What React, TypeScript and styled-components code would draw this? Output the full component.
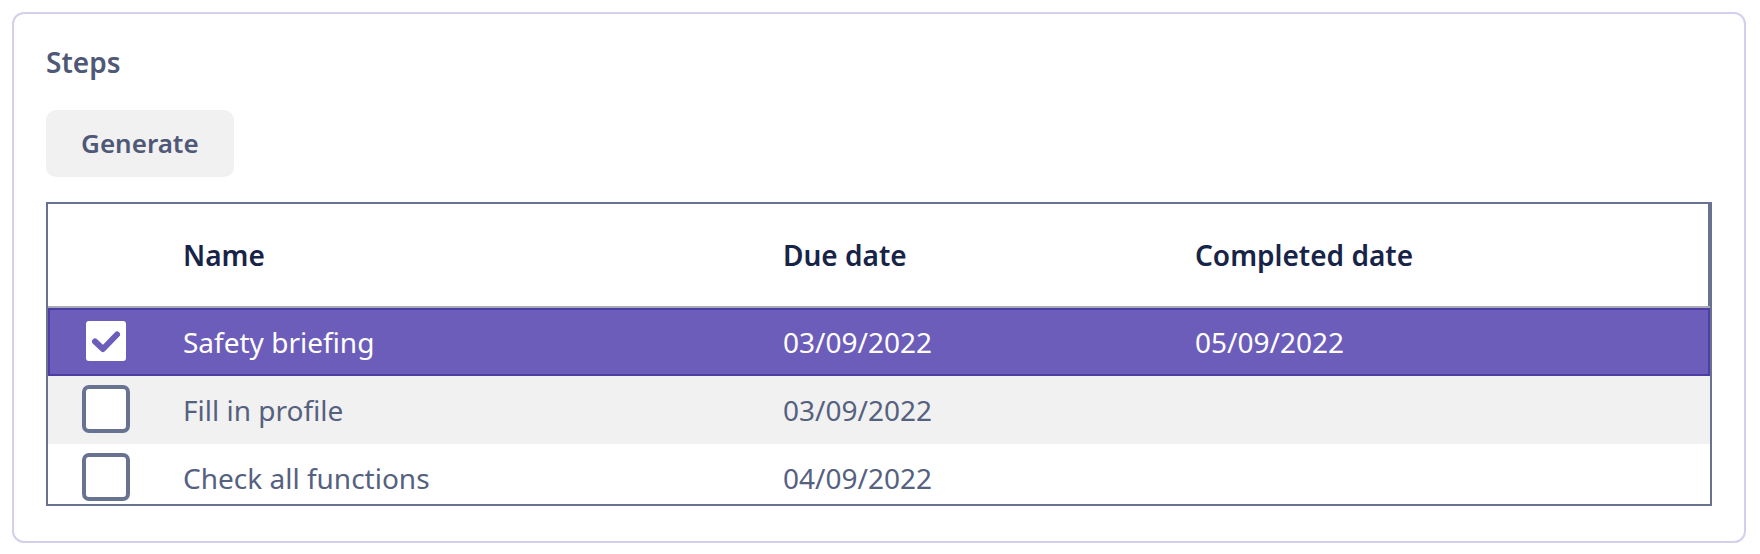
import React from 'react'
import styled, { createGlobalStyle } from 'styled-components'

type Step = {
  name: string
  due: string
  completed?: string
  done: boolean
}

const steps: Step[] = [
  { name: 'Safety briefing', due: '03/09/2022', completed: '05/09/2022', done: true },
  { name: 'Fill in profile', due: '03/09/2022', done: false },
  { name: 'Check all functions', due: '04/09/2022', done: false },
]

const GlobalStyle = createGlobalStyle`
  html, body {
    margin: 0;
    padding: 0;
    background: #ffffff;
  }
  body {
    font-family: 'Noto Sans', 'Open Sans', Arial, sans-serif;
  }
  * {
    box-sizing: border-box;
  }
`

const CheckIcon: React.FC = () => (
  <svg width="40" height="40" viewBox="0 0 40 40">
    <path
      d="M9 20.5 L17 28 L31 13.5"
      fill="none"
      stroke="#6c5dba"
      strokeWidth="6"
      strokeLinecap="round"
      strokeLinejoin="round"
    />
  </svg>
)

const App: React.FC = () => {
  return (
    <Page>
      <GlobalStyle />
      <Card>
        <Title>Steps</Title>
        <GenerateButton type="button">Generate</GenerateButton>
        <TableWrap>
          <HeaderRow>
            <Cell />
            <HeadCell>Name</HeadCell>
            <HeadCell>Due date</HeadCell>
            <HeadCell>Completed date</HeadCell>
          </HeaderRow>
          {steps.map((step, i) => (
            <Row key={step.name} selected={step.done} striped={i % 2 === 1}>
              <Cell>
                <Box checked={step.done}>{step.done && <CheckIcon />}</Box>
              </Cell>
              <Cell>{step.name}</Cell>
              <Cell>{step.due}</Cell>
              <Cell>{step.completed ?? ''}</Cell>
            </Row>
          ))}
        </TableWrap>
      </Card>
    </Page>
  )
}

const Page = styled.div`
  padding: 12px 14px 11px 12px;
`

const Card = styled.div`
  border: 2px solid #d3cfec;
  border-radius: 12px;
  padding: 29px 32px 35px;
  display: flex;
  flex-direction: column;
  align-items: flex-start;
`

const Title = styled.h2`
  margin: 0;
  font-size: 28px;
  line-height: 38px;
  font-weight: 600;
  color: #4f5877;
`

const GenerateButton = styled.button`
  margin-top: 29px;
  border: none;
  background: #f1f1f2;
  border-radius: 10px;
  padding: 16px 35px;
  font-family: inherit;
  font-size: 26px;
  line-height: 35px;
  font-weight: 600;
  color: #4f5877;
  cursor: pointer;
`

const TableWrap = styled.div`
  margin-top: 25px;
  width: 100%;
  height: 304px;
  overflow: hidden;
  border: 2px solid #687391;
`

const columns = '135px 600px 412px 1fr'

const HeaderRow = styled.div`
  display: grid;
  grid-template-columns: ${columns};
  align-items: center;
  height: 104px;
  border-bottom: 2px solid #a7abb7;
  box-shadow: inset -2px 0 0 #687391;
`

const HeadCell = styled.div`
  font-size: 28px;
  line-height: 38px;
  font-weight: 600;
  color: #172448;
`

const Row = styled.div<{ selected: boolean; striped: boolean }>`
  display: grid;
  grid-template-columns: ${columns};
  align-items: center;
  height: 68px;
  font-size: 28px;
  line-height: 38px;
  color: ${p => (p.selected ? '#ffffff' : '#56617f')};
  background: ${p => (p.selected ? '#6c5dba' : p.striped ? '#f1f1f1' : '#ffffff')};
  box-shadow: ${p => (p.selected ? 'inset 0 0 0 2px #4e3ea3' : 'none')};
`

const Cell = styled.div`
  display: flex;
  align-items: center;
  min-width: 0;
  white-space: nowrap;
  &:first-child {
    padding-left: 34px;
  }
`

const Box = styled.span<{ checked: boolean }>`
  width: 48px;
  height: 48px;
  border: 4px solid ${p => (p.checked ? '#6c5dba' : '#687391')};
  border-radius: 7px;
  background: #ffffff;
  display: flex;
  align-items: center;
  justify-content: center;
  margin-top: -3px;
`

export default App
